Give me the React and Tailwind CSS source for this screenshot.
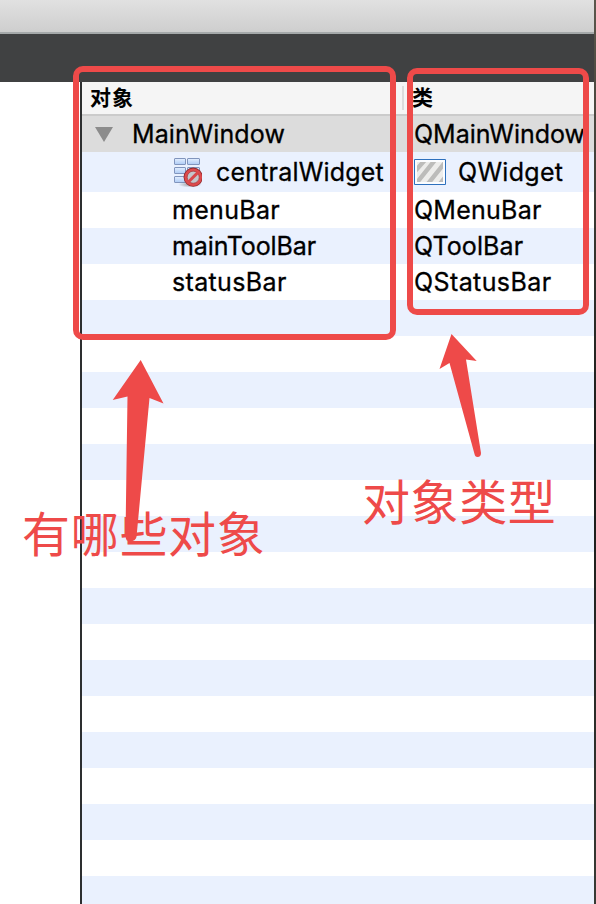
const rows = [
  { name: 'menuBar', type: 'QMenuBar', nameTracking: 'tracking-[0.3px]', typeTracking: 'tracking-[0.25px]', bg: 'bg-white' },
  { name: 'mainToolBar', type: 'QToolBar', nameTracking: 'tracking-[-0.1px]', typeTracking: 'tracking-[0.1px]', bg: 'bg-[#eaf1fe]' },
  { name: 'statusBar', type: 'QStatusBar', nameTracking: 'tracking-[0.35px]', typeTracking: 'tracking-[0.4px]', bg: 'bg-white' },
];

const emptyRows = Array.from({ length: 17 }, (_, i) => i);

function LayoutIcon() {
  return (
    <svg className="h-[32px] w-[30px] shrink-0" viewBox="0 0 30 32">
      <defs>
        <linearGradient id="cell" x1="0" y1="0" x2="0" y2="1">
          <stop offset="0" stopColor="#e4efff" />
          <stop offset="1" stopColor="#adcbf5" />
        </linearGradient>
        <radialGradient id="shade">
          <stop offset="0" stopColor="#555" stopOpacity=".55" />
          <stop offset="1" stopColor="#555" stopOpacity="0" />
        </radialGradient>
      </defs>
      <g fill="url(#cell)" stroke="#8195bd" strokeWidth="1">
        <rect x="2.5" y="2.5" width="11" height="6" rx=".5" />
        <rect x="15.5" y="2.5" width="12" height="6" rx=".5" />
        <rect x="2.5" y="11.5" width="11" height="6" rx=".5" />
        <rect x="15.5" y="11.5" width="12" height="6" rx=".5" />
        <rect x="2.5" y="20.5" width="11" height="6" rx=".5" />
      </g>
      <ellipse cx="18" cy="28.5" rx="12" ry="3" fill="url(#shade)" />
      <circle cx="21.2" cy="21.2" r="9.6" fill="#8f2a2e" />
      <circle cx="21.2" cy="21.2" r="8.8" fill="#dd4a4c" />
      <circle cx="21.2" cy="21.2" r="6" fill="#c4c6cb" stroke="#9a3236" strokeWidth=".6" />
      <path d="M16.600 25.800 25.800 16.600" stroke="#d9474a" strokeWidth="3" />
    </svg>
  );
}

function WidgetIcon() {
  return (
    <svg className="h-[26px] w-[32px] shrink-0" viewBox="0 0 32 26">
      <defs>
        <clipPath id="inner"><path d="M3 3h26v20H3z" /></clipPath>
      </defs>
      <path d="M.5.5h31v25H.5z" fill="#fbfdff" stroke="#2d70bd" />
      <g clipPath="url(#inner)">
        <path d="M3 3h26v20H3z" fill="#ededeb" />
        <path d="M-5 19 11 1M1 26 21 1M13 26 33 1M25 26 45 1" stroke="#bcbcba" strokeWidth="4.4" />
      </g>
    </svg>
  );
}

function Annotations() {
  return (
    <div className="pointer-events-none absolute inset-0 text-[#ee4a49]">
      <div className="absolute left-[73px] top-[66px] h-[274px] w-[323px] rounded-[10px] border-[6px] border-[#ee4a49]" />
      <div className="absolute left-[407px] top-[68px] h-[247px] w-[182px] rounded-[10px] border-[6px] border-[#ee4a49]" />
      <svg className="absolute inset-0 h-full w-full" viewBox="0 0 596 904" fill="#ee4a49">
        <path d="M140.700 360 163.500 403.500 149.500 398 136.500 537Q135.500 541 130 541.500 125.500 541.500 125.500 536L127.500 396.500 112.700 400Z" />
        <path d="M451.500 334 476.700 361 466 359.500 481 453Q481 457 477.500 457 475 457 474.500 454L449.500 363 439.500 369Z" />
      </svg>
      <div className="absolute left-[22px] top-[499px] whitespace-nowrap text-[48px] leading-[72px] tracking-[0.7px]">有哪些对象</div>
      <div className="absolute left-[362px] top-[467px] whitespace-nowrap text-[48px] leading-[72px] tracking-[0.6px]">对象类型</div>
    </div>
  );
}

export default function App() {
  return (
    <div className="relative flex h-[904px] w-[596px] overflow-hidden bg-white font-['Inter','Noto_Sans_CJK_SC',sans-serif] text-black">
      <div className="flex w-[594px] flex-col">
        <div className="h-[34px] shrink-0 border-b-2 border-[#a5a9aa] bg-linear-to-b from-[#e1e1e1] to-[#cecece]" />
        <div className="h-[48px] shrink-0 bg-[#404142]" />
        <div className="flex flex-1">
          <div className="w-[80px] shrink-0 bg-white" />
          <div className="flex-1 border-l-2 border-[#2d2f30] text-[25px] [-webkit-text-stroke:0.3px_black]">
            <div className="flex h-[34px] items-center border-b-2 border-[#cbcbcb] bg-[#f5f5f5] text-[21px] font-bold [-webkit-text-stroke:0px]">
              <div className="w-[320px] pl-[8px] tracking-[1px]">对象</div>
              <div className="h-[24px] w-[2px] bg-[#dcdcdc]" />
              <div className="pl-[8px]">类</div>
            </div>
            <div className="flex h-[36px] items-center bg-[#dcdcdc]">
              <div className="flex w-[332px] items-center pl-[13px]">
                <svg className="h-[15px] w-[18px]" viewBox="0 0 18 15"><path d="M0 0h18L9 15z" fill="#8c8c8c" /></svg>
                <span className="pt-[2px] pl-[19px] tracking-[0.1px]">MainWindow</span>
              </div>
              <span className="pt-[2px] tracking-[0px]">QMainWindow</span>
            </div>
            <div className="flex h-[40px] items-center bg-[#eaf1fe]">
              <div className="flex w-[332px] items-center pl-[90px]">
                <LayoutIcon />
                <span className="pt-[2px] pl-[14px] tracking-[0.2px]">centralWidget</span>
              </div>
              <WidgetIcon />
              <span className="pt-[2px] pl-[12px] tracking-[0.3px]">QWidget</span>
            </div>
            {rows.map((row) => (
              <div key={row.name} className={`flex h-[36px] items-center pt-[2px] ${row.bg}`}>
                <span className={`w-[332px] pl-[90px] ${row.nameTracking}`}>{row.name}</span>
                <span className={row.typeTracking}>{row.type}</span>
              </div>
            ))}
            {emptyRows.map((i) => (
              <div key={i} className={`h-[36px] ${i % 2 === 0 ? 'bg-[#eaf1fe]' : 'bg-white'}`} />
            ))}
          </div>
        </div>
      </div>
      <div className="w-[2px] bg-linear-to-b from-[#5b574c] via-[#191a18] to-[#393b35]" />
      <Annotations />
    </div>
  );
}
